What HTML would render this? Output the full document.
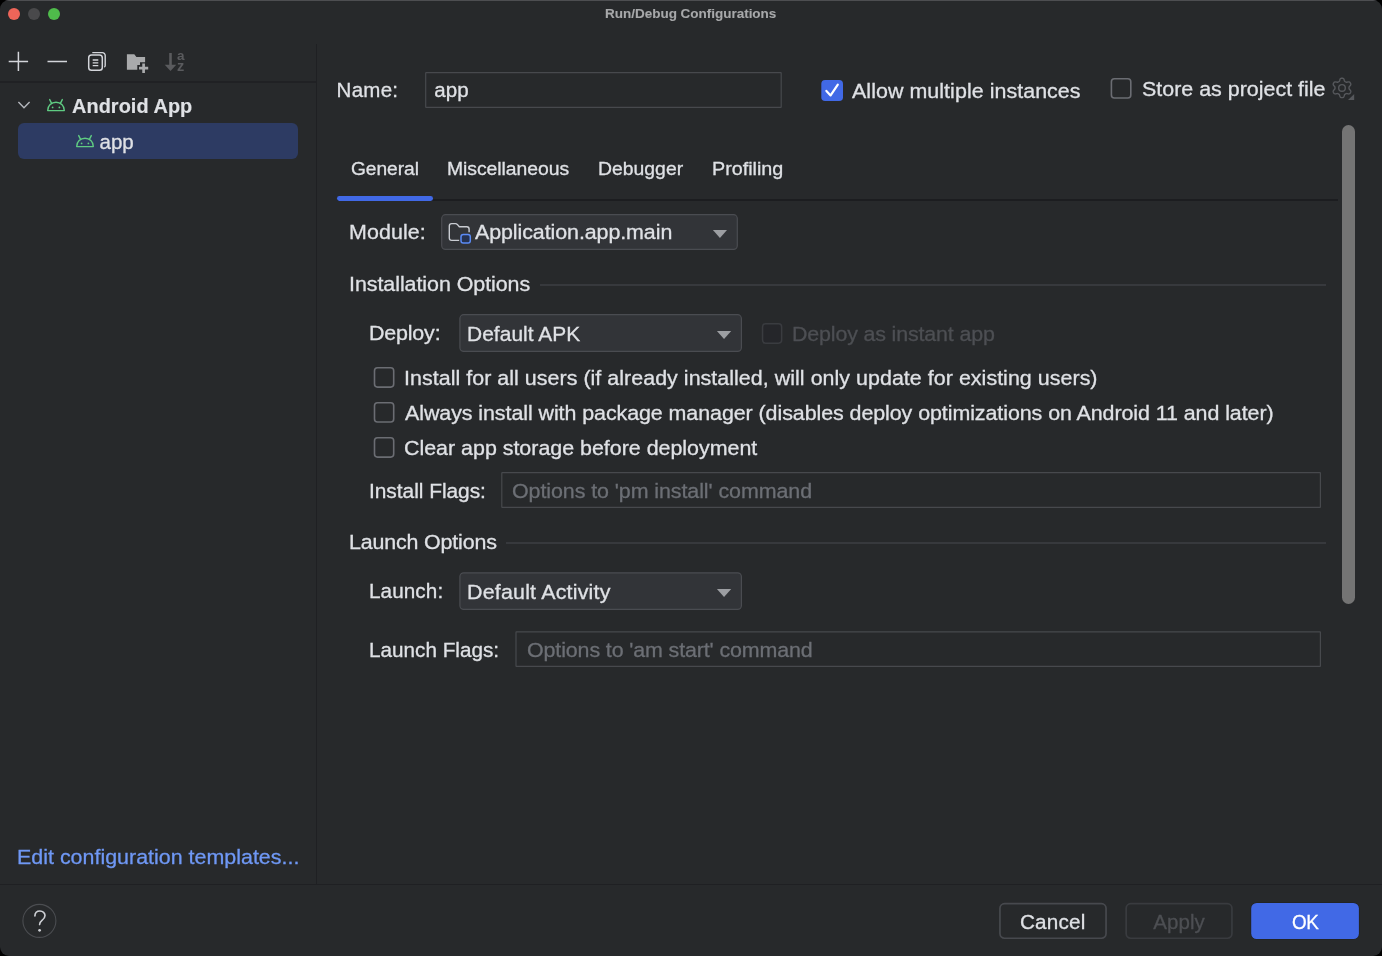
<!DOCTYPE html>
<html lang="en">
<head>
<meta charset="utf-8">
<title>Run/Debug Configurations</title>
<style>
html,body{margin:0;padding:0;background:#000;}
body{width:1382px;height:956px;overflow:hidden;font-family:"Liberation Sans",sans-serif;}
#win{will-change:transform;position:absolute;left:0;top:0;width:1382px;height:956px;background:#27292b;border-radius:9px;overflow:hidden;}
#win *{box-sizing:border-box;}
.abs{position:absolute;}
.t{position:absolute;white-space:nowrap;line-height:30px;height:30px;-webkit-text-stroke:0.300px currentColor;}
.topline{left:0;top:0;width:1382px;height:1px;background:#4d4e51;}
.dot{width:12.200px;height:12.200px;border-radius:50%;top:7.900px;}
.sel{left:18px;top:123.200px;width:280px;height:35.400px;border-radius:6px;background:#2d3b63;}
.sect{height:1.200px;background:#37393d;}
.scroll{left:1342px;top:125px;width:13px;height:479px;border-radius:6.500px;background:#747474;}
.tabline{left:337px;top:199.200px;width:1001px;height:1.600px;background:#1c1d20;}
.tabsel{left:337px;top:196.200px;width:96px;height:4.800px;border-radius:2.400px;background:#4169e6;}
svg{position:absolute;overflow:visible;}

</style>
</head>
<body>
<div id="win">
<div class="abs topline"></div>
<!-- traffic lights -->
<div class="abs dot" style="left:7.850px;background:#ed6559"></div>
<div class="abs dot" style="left:27.700px;background:#49494b"></div>
<div class="abs dot" style="left:47.900px;background:#4fbc4b"></div>

<!-- separators -->
<div class="abs" style="left:0;top:81px;width:316px;height:2px;background:#202124"></div>
<div class="abs" style="left:316px;top:44px;height:840px;width:1.300px;background:#1f2023"></div>
<div class="abs" style="left:0;top:883.800px;width:1382px;height:1.600px;background:#1f2023"></div>

<!-- toolbar icons -->
<svg id="ic_plus" style="left:8px;top:51px" width="21" height="21" viewBox="0 0 21 21"><path d="M10.400 0.700v19.400M0.700 10.400h19.400" stroke="#d3d5da" stroke-width="1.500" fill="none"/></svg>
<svg id="ic_minus" style="left:47px;top:51px" width="21" height="21" viewBox="0 0 21 21"><path d="M0.500 10.400h19.500" stroke="#d3d5da" stroke-width="1.500" fill="none"/></svg>
<svg id="ic_copy" style="left:80px;top:44px" width="40" height="36" viewBox="0 0 40 36">
  <path d="M12.300 8.600H22.300a2.900 2.900 0 0 1 2.900 2.900v10.100q0 1.100-.9 1.500" stroke="#d3d5da" stroke-width="1.400" fill="none"/>
  <rect x="8.700" y="11.100" width="13.600" height="15.100" rx="2.800" stroke="#d3d5da" stroke-width="1.500" fill="none"/>
  <path d="M12.700 16h5.600M12.700 18.800h5.600M12.700 21.600h5.600" stroke="#d3d5da" stroke-width="1.300" fill="none"/>
</svg>
<svg id="ic_folder" style="left:120px;top:44px" width="40" height="36" viewBox="0 0 40 36">
  <path d="M6.900 10.200h7.400l2.100 2.800h8.700v5.200h-5.100v2.900h-2.700v4.700H6.900z" fill="#a9aaac"/>
  <path d="M23.600 19.500v9.600M19 24.200h9.200" stroke="#a9aaac" stroke-width="2.700" fill="none"/>
</svg>
<svg id="ic_sort" style="left:160px;top:44px" width="40" height="36" viewBox="0 0 40 36">
  <path d="M10.500 9v13" stroke="#5a5b5e" stroke-width="2.600" fill="none"/>
  <path d="M4.700 20.800h11.600l-5.800 6.300z" fill="#5a5b5e"/>
  <text x="16.900" y="15.900" font-family="Liberation Sans, sans-serif" font-weight="700" font-size="13.500" fill="#5a5b5e">a</text>
  <text x="17" y="27" font-family="Liberation Sans, sans-serif" font-weight="700" font-size="14.500" fill="#5a5b5e">z</text>
</svg>

<!-- tree -->
<div class="abs sel"></div>
<svg id="ic_chev" style="left:17px;top:100px" width="14" height="10" viewBox="0 0 14 10"><path d="M1.400 2l5.600 5.800L12.600 2" stroke="#b4b7bd" stroke-width="1.400" fill="none"/></svg>
<svg id="ic_and1" style="left:46px;top:98px" width="20" height="14" viewBox="0 0 20 14">
  <path d="M1.700 12.600h16.600c0-4.900-3.700-8.300-8.300-8.300s-8.300 3.400-8.300 8.300z" stroke="#5fcb82" stroke-width="1.400" fill="none" stroke-linejoin="round"/>
  <path d="M5.600 5.400L3.700 1.600M14.400 5.400l1.900-3.800" stroke="#5fcb82" stroke-width="1.400" fill="none" stroke-linecap="round"/>
  <circle cx="6.600" cy="9.400" r="0.900" fill="#5fcb82"/><circle cx="13.400" cy="9.400" r="0.900" fill="#5fcb82"/>
</svg>
<svg id="ic_and2" style="left:75px;top:134px" width="20" height="14" viewBox="0 0 20 14">
  <path d="M1.700 12.600h16.600c0-4.900-3.700-8.300-8.300-8.300s-8.300 3.400-8.300 8.300z" stroke="#5fcb82" stroke-width="1.400" fill="none" stroke-linejoin="round"/>
  <path d="M5.600 5.400L3.700 1.600M14.400 5.400l1.900-3.800" stroke="#5fcb82" stroke-width="1.400" fill="none" stroke-linecap="round"/>
  <circle cx="6.600" cy="9.400" r="0.900" fill="#5fcb82"/><circle cx="13.400" cy="9.400" r="0.900" fill="#5fcb82"/>
</svg>

<!-- boxes overlay -->
<svg id="boxes" style="left:0;top:0" width="1382" height="956" viewBox="0 0 1382 956">
<rect x="425.70" y="72.70" width="355.50" height="34.70" rx="0.40" fill="none" stroke="#47494d" stroke-width="1.2"/>
<rect x="501.80" y="472.70" width="818.60" height="34.70" rx="0.40" fill="none" stroke="#47494d" stroke-width="1.2"/>
<rect x="516.00" y="631.80" width="804.40" height="34.60" rx="0.40" fill="none" stroke="#47494d" stroke-width="1.2"/>
<rect x="441.70" y="214.70" width="295.60" height="34.70" rx="3.80" fill="#323438" stroke="#4a4c51" stroke-width="1.2"/>
<rect x="459.90" y="314.70" width="281.50" height="36.70" rx="3.80" fill="#323438" stroke="#4a4c51" stroke-width="1.2"/>
<rect x="459.90" y="572.80" width="281.50" height="36.60" rx="3.80" fill="#323438" stroke="#4a4c51" stroke-width="1.2"/>
<path d="M712.9 229.9H727.0L719.95 238.0Z" fill="#9c9ea2"/>
<path d="M716.9 330.9H731.2L724.05 339.0Z" fill="#9c9ea2"/>
<path d="M716.9 589.0H731.2L724.05 597.1Z" fill="#9c9ea2"/>
<rect x="374.50" y="367.80" width="19.20" height="19.30" rx="3.00" fill="none" stroke="#6b6d73" stroke-width="1.6"/>
<rect x="374.50" y="402.70" width="19.20" height="19.30" rx="3.00" fill="none" stroke="#6b6d73" stroke-width="1.6"/>
<rect x="374.50" y="437.80" width="19.20" height="19.30" rx="3.00" fill="none" stroke="#6b6d73" stroke-width="1.6"/>
<rect x="1111.40" y="78.70" width="19.40" height="19.30" rx="3.00" fill="none" stroke="#6b6d73" stroke-width="1.6"/>
<rect x="762.55" y="323.85" width="19.10" height="19.30" rx="3.05" fill="#25262a" stroke="#3a3c40" stroke-width="1.5"/>
<rect x="821.3" y="80" width="21.700" height="21" rx="3.800" fill="#4169e6"/>
<path d="M826.400 90.900l4.200 4.500 7.200-10.700" stroke="#fff" stroke-width="2.200" fill="none" stroke-linecap="round" stroke-linejoin="round"/>
<rect x="999.95" y="903.65" width="106.10" height="34.60" rx="4.65" fill="none" stroke="#47494e" stroke-width="1.7"/>
<rect x="1126.15" y="903.65" width="105.80" height="34.60" rx="4.65" fill="none" stroke="#393b3f" stroke-width="1.7"/>
<rect x="1250.600" y="902.400" width="108.800" height="37.200" rx="6" fill="#1f2023"/><rect x="1251.200" y="903" width="107.700" height="36" rx="5.500" fill="#4169e6"/>
<circle cx="39.400" cy="920.850" r="16.500" fill="none" stroke="#4b4d51" stroke-width="1.100"/>
</svg>
<!-- name row -->
<svg id="ic_gear" style="left:1330px;top:76px" width="26" height="26" viewBox="0 0 26 26">
  <path d="M19.00 11.90L19.01 11.59L19.03 11.28L19.10 10.97L19.27 10.62L19.59 10.22L20.07 9.74L20.51 9.22L20.76 8.71L20.81 8.25L20.74 7.83L20.59 7.43L20.40 7.05L20.17 6.69L19.90 6.37L19.57 6.09L19.14 5.91L18.58 5.87L17.90 6.00L17.25 6.17L16.74 6.25L16.36 6.22L16.05 6.12L15.77 5.99L15.50 5.84L15.24 5.68L14.98 5.50L14.74 5.28L14.52 4.97L14.34 4.48L14.16 3.83L13.93 3.19L13.62 2.72L13.25 2.44L12.84 2.29L12.42 2.22L12.00 2.20L11.58 2.22L11.16 2.29L10.75 2.44L10.38 2.72L10.07 3.19L9.84 3.83L9.66 4.48L9.48 4.97L9.26 5.28L9.02 5.50L8.76 5.68L8.50 5.84L8.23 5.99L7.95 6.12L7.64 6.22L7.26 6.25L6.75 6.17L6.10 6.00L5.42 5.87L4.86 5.91L4.43 6.09L4.10 6.37L3.83 6.69L3.60 7.05L3.41 7.43L3.26 7.83L3.19 8.25L3.24 8.71L3.49 9.22L3.93 9.74L4.41 10.22L4.73 10.62L4.90 10.97L4.97 11.28L4.99 11.59L5.00 11.90L4.99 12.21L4.97 12.52L4.90 12.83L4.73 13.18L4.41 13.58L3.93 14.06L3.49 14.58L3.24 15.09L3.19 15.55L3.26 15.97L3.41 16.37L3.60 16.75L3.83 17.11L4.10 17.43L4.43 17.71L4.86 17.89L5.42 17.93L6.10 17.80L6.75 17.63L7.26 17.55L7.64 17.58L7.95 17.68L8.23 17.81L8.50 17.96L8.76 18.12L9.02 18.30L9.26 18.52L9.48 18.83L9.66 19.32L9.84 19.97L10.07 20.61L10.38 21.08L10.75 21.36L11.16 21.51L11.58 21.58L12.00 21.60L12.42 21.58L12.84 21.51L13.25 21.36L13.62 21.08L13.93 20.61L14.16 19.97L14.34 19.32L14.52 18.83L14.74 18.52L14.98 18.30L15.24 18.12L15.50 17.96L15.77 17.81L16.05 17.68L16.36 17.58L16.74 17.55L17.25 17.63L17.90 17.80L18.58 17.93L19.14 17.89L19.57 17.71L19.90 17.43L20.17 17.11L20.40 16.75L20.59 16.37L20.74 15.97L20.81 15.55L20.76 15.09L20.51 14.58L20.07 14.06L19.59 13.58L19.27 13.18L19.10 12.83L19.03 12.52L19.01 12.21Z" stroke="#56585c" stroke-width="1.400" fill="none" stroke-linejoin="round"/>
  <circle cx="12.0" cy="11.9" r="3.300" stroke="#56585c" stroke-width="1.400" fill="none"/>
  <path d="M24.200 18v6.100h-6.200z" fill="#56585c"/>
</svg>
<div class="abs scroll"></div>

<!-- tabs -->
<div class="abs tabline"></div>
<div class="abs tabsel"></div>

<!-- module -->
<svg id="ic_mod" style="left:446px;top:220px" width="28" height="26" viewBox="0 0 28 26">
  <path d="M13.200 20.400H5.600a2.300 2.300 0 0 1-2.300-2.300V5.900a2.300 2.300 0 0 1 2.300-2.300h3.900c.7 0 1.300.3 1.800.8l2 2.300h7.500a2.300 2.300 0 0 1 2.300 2.300v3.300" stroke="#c9ccd2" stroke-width="1.400" fill="none"/>
  <rect x="15" y="14.400" width="9.300" height="8.600" rx="2.300" stroke="#5b8bf5" stroke-width="1.500" fill="#253250"/>
</svg>

<!-- installation options -->
<div class="abs sect" style="left:539.500px;top:284.400px;width:786.500px"></div>

<!-- launch options -->
<div class="abs sect" style="left:506.400px;top:542.400px;width:819.600px"></div>

<!-- bottom -->
<svg id="ic_q" style="left:30px;top:908px" width="20" height="26" viewBox="0 0 20 26">
  <path d="M4.900 7.900C5 4.900 7 3 9.900 3c3 0 5.100 2 5.100 4.600 0 2.300-1.400 3.600-3 4.800-1.600 1.200-2.400 2.200-2.400 4.200" stroke="#cdcfd4" stroke-width="1.650" fill="none" stroke-linecap="round"/>
  <circle cx="9.600" cy="22.300" r="1.350" fill="#cdcfd4"/>
</svg>

<span class="t" id="title" style="left:605.09px;top:-0.79px;font-size:13.5px;font-weight:700;color:#a7a8aa;letter-spacing:-0.021px;transform:scaleX(1.0);transform-origin:0 0;-webkit-text-stroke-width:0.1px">Run/Debug Configurations</span>
<span class="t" id="t_android" style="left:71.53px;top:91.21px;font-size:20.5px;font-weight:700;color:#dfe1e5;letter-spacing:0.062px;transform:scaleX(0.97);transform-origin:0 0;-webkit-text-stroke-width:0.15px">Android App</span>
<span class="t" id="t_app" style="left:99.50px;top:126.74px;font-size:20.5px;font-weight:400;color:#dfe1e5;letter-spacing:-0.012px;transform:scaleX(1.0);transform-origin:0 0">app</span>
<span class="t" id="link" style="left:17.42px;top:842.47px;font-size:20.5px;font-weight:400;color:#6f98f5;letter-spacing:0.004px;transform:scaleX(1.045);transform-origin:0 0">Edit configuration templates...</span>
<span class="t" id="name_l" style="left:336.62px;top:75.09px;font-size:20.5px;font-weight:400;color:#dfe1e5;letter-spacing:0.246px;transform:scaleX(1.0);transform-origin:0 0">Name:</span>
<span class="t" id="name_v" style="left:434.25px;top:74.51px;font-size:20.5px;font-weight:400;color:#dfe1e5;letter-spacing:0.127px;transform:scaleX(1.0);transform-origin:0 0">app</span>
<span class="t" id="allow" style="left:852.31px;top:75.79px;font-size:20.5px;font-weight:400;color:#dfe1e5;letter-spacing:0.047px;transform:scaleX(1.045);transform-origin:0 0">Allow multiple instances</span>
<span class="t" id="store" style="left:1141.56px;top:73.77px;font-size:20.5px;font-weight:400;color:#dfe1e5;letter-spacing:0.007px;transform:scaleX(1.045);transform-origin:0 0">Store as project file</span>
<span class="t" id="tab1" style="left:350.97px;top:154.14px;font-size:19.2px;font-weight:400;color:#dfe1e5;letter-spacing:-0.043px;transform:scaleX(1.0);transform-origin:0 0">General</span>
<span class="t" id="tab2" style="left:446.89px;top:154.10px;font-size:19.2px;font-weight:400;color:#dfe1e5;letter-spacing:-0.058px;transform:scaleX(1.01);transform-origin:0 0">Miscellaneous</span>
<span class="t" id="tab3" style="left:597.68px;top:154.29px;font-size:19.2px;font-weight:400;color:#dfe1e5;letter-spacing:-0.000px;transform:scaleX(1.01);transform-origin:0 0">Debugger</span>
<span class="t" id="tab4" style="left:712.22px;top:154.29px;font-size:19.2px;font-weight:400;color:#dfe1e5;letter-spacing:-0.021px;transform:scaleX(1.03);transform-origin:0 0">Profiling</span>
<span class="t" id="module_l" style="left:349.18px;top:216.90px;font-size:20.5px;font-weight:400;color:#dfe1e5;letter-spacing:0.089px;transform:scaleX(1.045);transform-origin:0 0">Module:</span>
<span class="t" id="module_v" style="left:475.43px;top:217.18px;font-size:20.5px;font-weight:400;color:#dfe1e5;letter-spacing:-0.080px;transform:scaleX(1.045);transform-origin:0 0">Application.app.main</span>
<span class="t" id="inst_opt" style="left:349.04px;top:269.00px;font-size:20.5px;font-weight:400;color:#dfe1e5;letter-spacing:-0.052px;transform:scaleX(1.045);transform-origin:0 0">Installation Options</span>
<span class="t" id="deploy_l" style="left:369.25px;top:318.19px;font-size:20.5px;font-weight:400;color:#dfe1e5;letter-spacing:-0.168px;transform:scaleX(1.045);transform-origin:0 0">Deploy:</span>
<span class="t" id="deploy_v" style="left:466.71px;top:318.99px;font-size:20.5px;font-weight:400;color:#dfe1e5;letter-spacing:0.052px;transform:scaleX(1.02);transform-origin:0 0">Default APK</span>
<span class="t" id="instant" style="left:792.47px;top:318.98px;font-size:20.5px;font-weight:400;color:#4d4f53;letter-spacing:-0.154px;transform:scaleX(1.045);transform-origin:0 0">Deploy as instant app</span>
<span class="t" id="cb1" style="left:403.80px;top:363.48px;font-size:20.5px;font-weight:400;color:#dfe1e5;letter-spacing:0.035px;transform:scaleX(1.045);transform-origin:0 0">Install for all users (if already installed, will only update for existing users)</span>
<span class="t" id="cb2" style="left:405.41px;top:398.19px;font-size:20.5px;font-weight:400;color:#dfe1e5;letter-spacing:-0.066px;transform:scaleX(1.045);transform-origin:0 0">Always install with package manager (disables deploy optimizations on Android 11 and later)</span>
<span class="t" id="cb3" style="left:403.71px;top:433.27px;font-size:20.5px;font-weight:400;color:#dfe1e5;letter-spacing:-0.011px;transform:scaleX(1.045);transform-origin:0 0">Clear app storage before deployment</span>
<span class="t" id="iflags_l" style="left:369.16px;top:476.30px;font-size:20.5px;font-weight:400;color:#dfe1e5;letter-spacing:-0.035px;transform:scaleX(1.02);transform-origin:0 0">Install Flags:</span>
<span class="t" id="iflags_p" style="left:512.03px;top:476.33px;font-size:20.5px;font-weight:400;color:#6c6f75;letter-spacing:-0.070px;transform:scaleX(1.045);transform-origin:0 0">Options to 'pm install' command</span>
<span class="t" id="launch_opt" style="left:349.25px;top:527.39px;font-size:20.5px;font-weight:400;color:#dfe1e5;letter-spacing:-0.161px;transform:scaleX(1.045);transform-origin:0 0">Launch Options</span>
<span class="t" id="launch_l" style="left:369.01px;top:576.40px;font-size:20.5px;font-weight:400;color:#dfe1e5;letter-spacing:0.076px;transform:scaleX(1.01);transform-origin:0 0">Launch:</span>
<span class="t" id="launch_v" style="left:466.65px;top:577.39px;font-size:20.5px;font-weight:400;color:#dfe1e5;letter-spacing:0.186px;transform:scaleX(1.045);transform-origin:0 0">Default Activity</span>
<span class="t" id="lflags_l" style="left:369.01px;top:635.40px;font-size:20.5px;font-weight:400;color:#dfe1e5;letter-spacing:-0.004px;transform:scaleX(1.01);transform-origin:0 0">Launch Flags:</span>
<span class="t" id="lflags_p" style="left:526.57px;top:635.45px;font-size:20.5px;font-weight:400;color:#6c6f75;letter-spacing:-0.117px;transform:scaleX(1.045);transform-origin:0 0">Options to 'am start' command</span>
<span class="t" id="cancel" style="left:1020.49px;top:906.77px;font-size:20.5px;font-weight:400;color:#dfe1e5;letter-spacing:0.166px;transform:scaleX(1.01);transform-origin:0 0">Cancel</span>
<span class="t" id="apply" style="left:1153.34px;top:906.59px;font-size:20.5px;font-weight:400;color:#4d4f53;letter-spacing:0.029px;transform:scaleX(1.0);transform-origin:0 0">Apply</span>
<span class="t" id="ok" style="left:1291.93px;top:906.94px;font-size:20.5px;font-weight:400;color:#ffffff;letter-spacing:-0.447px;transform:scaleX(0.92);transform-origin:0 0">OK</span>
</div>
</body>
</html>
